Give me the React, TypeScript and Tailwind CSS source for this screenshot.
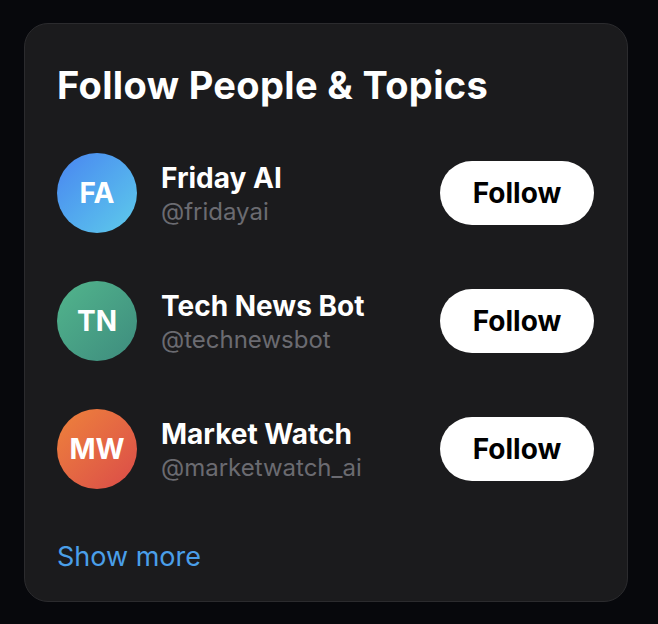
import React from "react";

const people = [
  { initials: "FA", name: "Friday AI", handle: "@fridayai", grad: "bg-gradient-to-br from-[#4a84f0] to-[#5fcbea]" },
  { initials: "TN", name: "Tech News Bot", handle: "@technewsbot", grad: "bg-gradient-to-br from-[#52b58c] to-[#3e8c7e]" },
  { initials: "MW", name: "Market Watch", handle: "@marketwatch_ai", grad: "bg-gradient-to-br from-[#ee823a] to-[#da4a48]" },
];

export default function App() {
  return (
    <div
      className="w-[658px] h-[624px] bg-[#07080c] pt-[23px] pl-[24px]"
      style={{ fontFamily: "Inter, 'Noto Sans', sans-serif" }}
    >
      <div className="w-[604px] rounded-[24px] border border-[#2b2b2e] bg-[#1b1b1d] pl-8 pr-[33px] pt-[38px] pb-[27px]">
        <h2 className="text-[38px] leading-[46px] font-bold text-white tracking-[0.35px]">
          Follow People &amp; Topics
        </h2>
        <div className="mt-[45px] flex flex-col gap-[48px]">
          {people.map((p) => (
            <div key={p.initials} className="flex items-center h-20">
              <div
                className={`w-20 h-20 rounded-full flex items-center justify-center text-white text-[28px] font-bold ${p.grad}`}
              >
                {p.initials}
              </div>
              <div className="ml-6 flex-1 flex flex-col">
                <span className="text-[28px] leading-[38px] font-bold text-white">{p.name}</span>
                <span className="text-[24px] leading-[30px] text-[#6b6b71]">{p.handle}</span>
              </div>
              <button className="w-[154px] h-16 rounded-full bg-white text-black text-[28px] font-bold">
                Follow
              </button>
            </div>
          ))}
        </div>
        <div className="mt-[51px] text-[27px] leading-[34px] text-[#4a9fe9]">Show more</div>
      </div>
    </div>
  );
}
